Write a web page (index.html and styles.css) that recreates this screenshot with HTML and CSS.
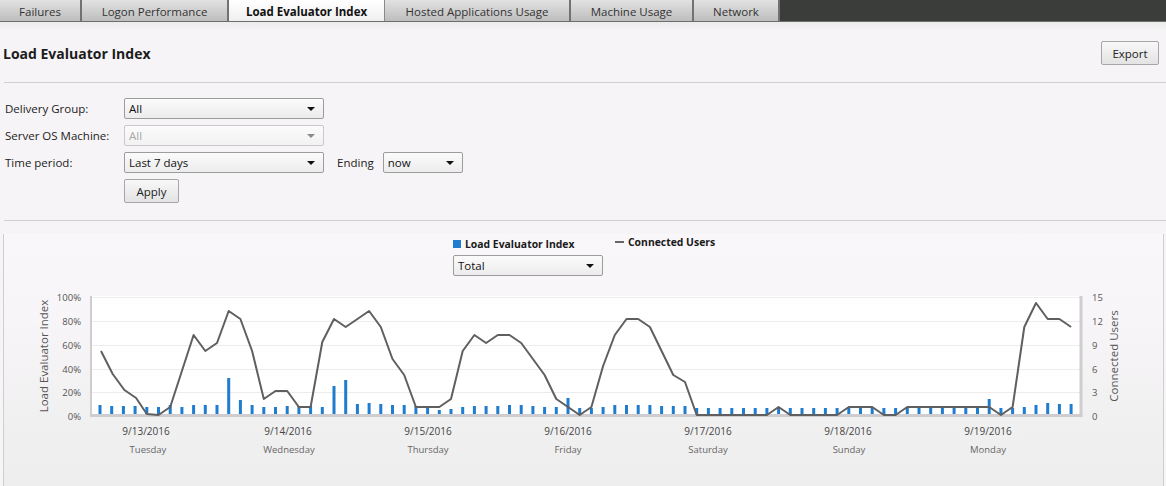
FILE: index.html
```html
<!DOCTYPE html>
<html>
<head>
<meta charset="utf-8">
<title>Load Evaluator Index</title>
<link rel="stylesheet" href="styles.css">
</head>
<body>
<nav class="tabs">
  <div class="tab t-failures">Failures</div>
  <div class="tab t-logon">Logon Performance</div>
  <div class="tab tab-active t-load">Load Evaluator Index</div>
  <div class="tab t-hosted">Hosted Applications Usage</div>
  <div class="tab t-machine">Machine Usage</div>
  <div class="tab t-network">Network</div>
</nav>
<div class="band"></div>
<header class="page-header">
  <h1 class="title">Load Evaluator Index</h1>
  <div class="btn btn-export">Export</div>
</header>
<section class="filters">
  <div class="row">
    <label class="lbl">Delivery Group:</label>
    <div class="select sel-wide"><span>All</span><i class="arrow"></i></div>
  </div>
  <div class="row">
    <label class="lbl">Server OS Machine:</label>
    <div class="select sel-wide disabled"><span>All</span><i class="arrow"></i></div>
  </div>
  <div class="row">
    <label class="lbl">Time period:</label>
    <div class="select sel-wide"><span>Last 7 days</span><i class="arrow"></i></div>
    <span class="ending">Ending</span>
    <div class="select sel-small"><span>now</span><i class="arrow"></i></div>
  </div>
  <div class="row">
    <span class="lbl"></span>
    <div class="btn btn-apply">Apply</div>
  </div>
</section>
<div class="divider"></div>
<section class="chart-panel">
  <div class="legend">
    <div class="legend-item lei">
      <div class="legend-key"><span class="sq"></span><span class="legend-text">Load Evaluator Index</span></div>
      <div class="select sel-total"><span>Total</span><i class="arrow"></i></div>
    </div>
    <div class="legend-item cu">
      <div class="legend-key"><span class="dash"></span><span class="legend-text">Connected Users</span></div>
    </div>
  </div>
  <svg class="chart" width="1159" height="201" viewBox="4 285 1159 201" xmlns="http://www.w3.org/2000/svg">
    <rect x="92" y="297" width="988" height="119" fill="#ffffff"/>
    <g stroke="#ececec" stroke-width="1">
      <line x1="92" y1="298.5" x2="1080" y2="298.5"/>
      <line x1="92" y1="322.5" x2="1080" y2="322.5"/>
      <line x1="92" y1="346.5" x2="1080" y2="346.5"/>
      <line x1="92" y1="370.5" x2="1080" y2="370.5"/>
      <line x1="92" y1="393.5" x2="1080" y2="393.5"/>
    </g>
    <line x1="91" y1="297" x2="91" y2="418" stroke="#cfcdcf" stroke-width="2"/>
    <line x1="1081" y1="297" x2="1081" y2="418" stroke="#cfcdcf" stroke-width="3"/>
    <line x1="90" y1="416.5" x2="1082.5" y2="416.5" stroke="#cfcdcf" stroke-width="3"/>
    <path stroke="#1f7dd0" stroke-width="3" fill="none" d="M100 415V406M111.7 415V407M123.4 415V407M135.1 415V407M146.8 415V408M158.5 415V408M170.2 415V406M181.9 415V408M193.6 415V406M205.3 415V406M217 415V406M228.7 415V379M240.4 415V401M252.1 415V406M263.8 415V408M275.5 415V408M287.2 415V407M298.9 415V407M310.6 415V407M322.3 415V408M334 415V387M345.7 415V381M357.4 415V405M369.1 415V404M380.8 415V405M392.5 415V406M404.2 415V406M415.9 415V407M427.6 415V407M439.3 415V411M451 415V410M462.7 415V408M474.4 415V407M486.1 415V407M497.8 415V407M509.5 415V406M521.2 415V406M532.9 415V407M544.6 415V408M556.3 415V408M568 415V399M579.7 415V409M591.4 415V409M603.1 415V408M614.8 415V406M626.5 415V406M638.2 415V406M649.9 415V406M661.6 415V407M673.3 415V407M685 415V407M696.7 415V409M708.4 415V409M720.1 415V409M731.8 415V409M743.5 415V409M755.2 415V409M766.9 415V409M778.6 415V409M790.3 415V409M802 415V409M813.7 415V409M825.4 415V409M837.1 415V409M848.8 415V409M860.5 415V409M872.2 415V409M883.9 415V409M895.6 415V409M907.3 415V409M919 415V409M930.7 415V409M942.4 415V409M954.1 415V409M965.8 415V408M977.5 415V408M989.2 415V400M1000.9 415V409M1012.6 415V409M1024.3 415V408M1036 415V406M1047.7 415V404M1059.4 415V405M1071.1 415V405"/>
    <polyline fill="none" stroke="#5f5f5f" stroke-width="2" stroke-linejoin="round" points="101,352 112.7,375 124.4,391 136.1,399 146.8,415 158.5,416 170.2,408 181.9,372 193.6,336 205.3,352 217,344 228.7,312 240.4,320 252.1,352 263.8,400 275.5,392 287.2,392 298.9,408 310.6,408 322.3,343 334,320 345.7,328 357.4,320 369.1,312 380.8,328 392.5,360 404.2,376 415.9,408 427.6,408 439.3,408 451,400 462.7,352 474.4,336 486.1,344 497.8,336 509.5,336 521.2,344 532.9,360 544.6,376 556.3,400 568,408 579.7,416 591.4,408 603.1,367 614.8,336 626.5,320 638.2,320 649.9,328 661.6,352 673.3,376 685,383 696.7,416 708.4,416 720.1,416 731.8,416 743.5,416 755.2,416 766.9,416 778.6,408 790.3,416 802,416 813.7,416 825.4,416 837.1,416 848.8,408 860.5,408 872.2,408 883.9,416 895.6,416 907.3,408 919,408 930.7,408 942.4,408 954.1,408 965.8,408 977.5,408 989.2,408 1000.9,416 1012.6,408 1024.3,328 1036,304 1047.7,320 1059.4,320 1071.1,328"/>
    <g class="ylab" text-anchor="end">
      <text x="81" y="301.5">100%</text>
      <text x="81" y="325.5">80%</text>
      <text x="81" y="349.5">60%</text>
      <text x="81" y="373.5">40%</text>
      <text x="81" y="396.5">20%</text>
      <text x="81" y="420.5">0%</text>
    </g>
    <g class="ylab" text-anchor="start">
      <text x="1092" y="301.5">15</text>
      <text x="1092" y="325.5">12</text>
      <text x="1092" y="349.5">9</text>
      <text x="1092" y="373.5">6</text>
      <text x="1092" y="396.5">3</text>
      <text x="1092" y="420.5">0</text>
    </g>
    <text class="axis-title" transform="translate(48 357) rotate(-90)" text-anchor="middle">Load Evaluator Index</text>
    <text class="axis-title" transform="translate(1118 357) rotate(-90)" text-anchor="middle">Connected Users</text>
    <g class="xdate" text-anchor="middle">
      <text x="146" y="436">9/13/2016</text>
      <text x="288" y="436">9/14/2016</text>
      <text x="428" y="436">9/15/2016</text>
      <text x="568" y="436">9/16/2016</text>
      <text x="708" y="436">9/17/2016</text>
      <text x="848" y="436">9/18/2016</text>
      <text x="988" y="436">9/19/2016</text>
    </g>
    <g class="xday" text-anchor="middle">
      <text x="148" y="454">Tuesday</text>
      <text x="289" y="454">Wednesday</text>
      <text x="428" y="454">Thursday</text>
      <text x="568" y="454">Friday</text>
      <text x="708" y="454">Saturday</text>
      <text x="849" y="454">Sunday</text>
      <text x="988" y="454">Monday</text>
    </g>
  </svg>
</section>
</body>
</html>
```
FILE: styles.css
```css
* { box-sizing: border-box; }
html, body { margin: 0; padding: 0; }
body {
  width: 1166px;
  height: 486px;
  overflow: hidden;
  font-family: "Open Sans", "Noto Sans", sans-serif;
  font-size: 11.5px;
  color: #222;
  background: #f6f4f6;
}
.tabs {
  display: flex;
  height: 22px;
  background: #3b3d3a;
  border-bottom: 1px solid #6d6d6d;
}
.tab {
  display: flex;
  align-items: center;
  justify-content: center;
  height: 21px;
  background: linear-gradient(#e2e2e2, #bdbdbd);
  border-right: 2px solid #727272;
  color: #333;
  padding-top: 1px;
}
.t-failures { width: 82px; }
.t-logon { width: 147px; }
.t-load { width: 156px; }
.t-hosted { width: 186px; }
.t-machine { width: 123px; }
.t-network { width: 86px; }
.tab-active {
  background: linear-gradient(#ffffff, #efefef);
  font-weight: 700;
  color: #111;
  border-right: 1px solid #8a8a8a;
}
.band {
  height: 8px;
  background: linear-gradient(#ececec, #f5f3f5);
}
.page-header {
  display: flex;
  align-items: center;
  justify-content: space-between;
  height: 53px;
  margin-left: 4px;
  padding-bottom: 6px;
  border-bottom: 1px solid #cfcfcf;
}
.title {
  margin: 0 0 0 -1px;
  font-size: 14px;
  font-weight: 700;
  color: #1c1c1c;
}
.btn {
  display: flex;
  align-items: center;
  justify-content: center;
  height: 24px;
  border: 1px solid #a6a6a6;
  border-radius: 2px;
  background: linear-gradient(#f8f8f8, #e3e3e3);
  color: #222;
}
.btn-export { width: 58px; margin-right: 7px; }
.btn-apply { width: 55px; }
.filters {
  display: flex;
  flex-direction: column;
  gap: 6px;
  padding: 15px 0 0 5px;
}
.row {
  display: flex;
  align-items: center;
  height: 21px;
}
.row:last-child { height: 24px; }
.lbl { width: 119px; color: #222; }
.select {
  display: flex;
  align-items: center;
  justify-content: space-between;
  height: 21px;
  padding: 0 8px 0 4px;
  border: 1px solid #9c9c9c;
  border-radius: 2px;
  background: linear-gradient(#fbfbfb, #ececec);
  color: #111;
}
.select .arrow {
  width: 0;
  height: 0;
  border-left: 4px solid transparent;
  border-right: 4px solid transparent;
  border-top: 4px solid #111;
}
.select.disabled {
  border-color: #c9c9c9;
  color: #a8a8a8;
  background: linear-gradient(#fbfbfb, #f2f2f2);
}
.select.disabled .arrow { border-top-color: #8a8a8a; }
.sel-wide { width: 200px; }
.sel-small { width: 80px; }
.ending { margin: 0 9px 0 13px; color: #222; }
.divider {
  margin: 17px 0 0 4px;
  border-top: 1px solid #cfcfcf;
}
.chart-panel {
  margin: 13px 2px 0 3px;
  height: 252px;
  border-left: 1px solid #cfcfcf;
  border-right: 1px solid #cfcfcf;
  background: linear-gradient(#f9f7f9 0%, #f7f5f7 35%, #f1f0f1 75%, #eeeeee 100%);
}
.legend {
  display: flex;
  height: 50px;
  padding: 1px 0 0 449px;
  gap: 12px;
}
.legend-item { display: flex; flex-direction: column; }
.lei { width: 150px; }
.legend-key {
  display: flex;
  align-items: center;
  height: 14px;
  font-size: 10.4px;
  font-weight: 700;
  color: #1a1a1a;
}
.lei .legend-key { margin-top: 2px; }
.sq {
  width: 8px;
  height: 8px;
  margin: 0 4px 0 0;
  background: #1f7dd0;
}
.dash {
  width: 9px;
  height: 2px;
  margin-right: 4px;
  background: #666;
}
.sel-total { width: 150px; margin-top: 4px; }
.chart { display: block; }
.ylab text { font-size: 9.5px; fill: #555; }
.axis-title { font-size: 11.5px; fill: #555; }
.xdate text { font-size: 10px; fill: #444; }
.xday text { font-size: 9.5px; fill: #666; }
```
